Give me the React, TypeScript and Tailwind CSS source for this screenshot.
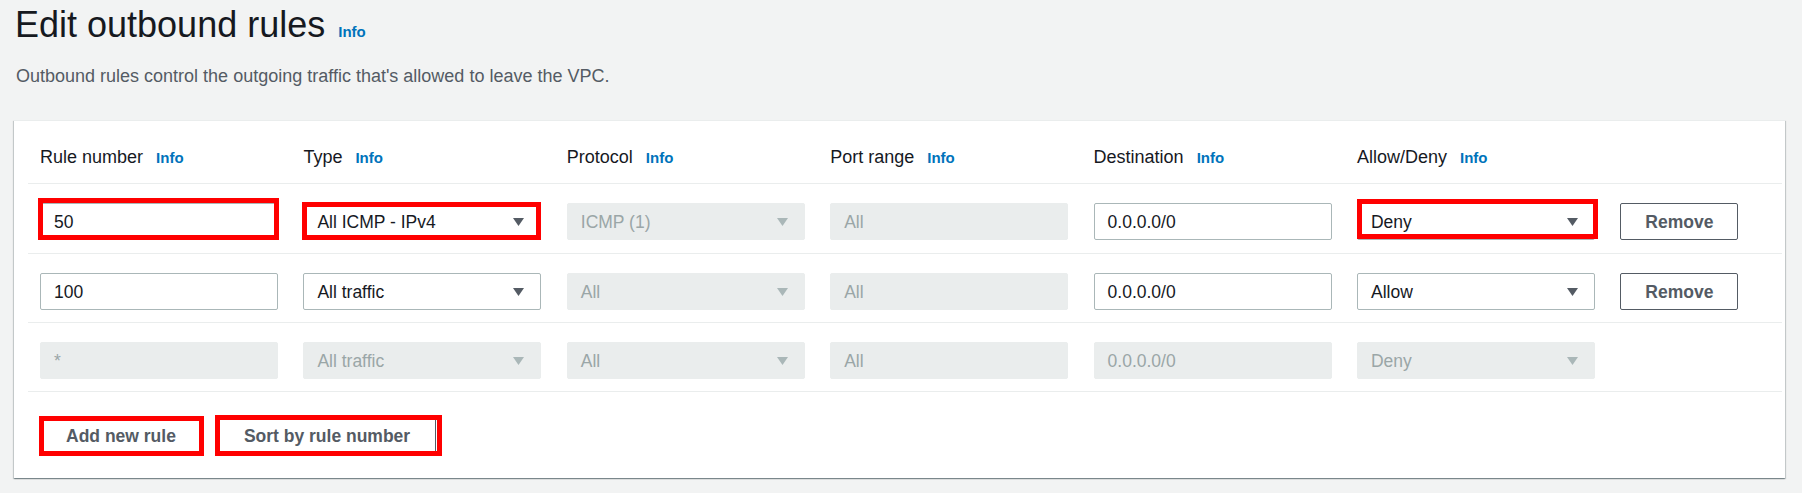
import React from 'react';

type Cell = {
  kind: 'input' | 'select';
  value: string;
  disabled?: boolean;
};

type Rule = {
  cells: Cell[];
  removable: boolean;
  padBottom: string;
};

const headers = ['Rule number', 'Type', 'Protocol', 'Port range', 'Destination', 'Allow/Deny'];

const rules: Rule[] = [
  {
    removable: true,
    padBottom: 'pb-[13px]',
    cells: [
      { kind: 'input', value: '50' },
      { kind: 'select', value: 'All ICMP - IPv4' },
      { kind: 'select', value: 'ICMP (1)', disabled: true },
      { kind: 'input', value: 'All', disabled: true },
      { kind: 'input', value: '0.0.0.0/0' },
      { kind: 'select', value: 'Deny' },
    ],
  },
  {
    removable: true,
    padBottom: 'pb-[12px]',
    cells: [
      { kind: 'input', value: '100' },
      { kind: 'select', value: 'All traffic' },
      { kind: 'select', value: 'All', disabled: true },
      { kind: 'input', value: 'All', disabled: true },
      { kind: 'input', value: '0.0.0.0/0' },
      { kind: 'select', value: 'Allow' },
    ],
  },
  {
    removable: false,
    padBottom: 'pb-[12px]',
    cells: [
      { kind: 'input', value: '*', disabled: true },
      { kind: 'select', value: 'All traffic', disabled: true },
      { kind: 'select', value: 'All', disabled: true },
      { kind: 'input', value: 'All', disabled: true },
      { kind: 'input', value: '0.0.0.0/0', disabled: true },
      { kind: 'select', value: 'Deny', disabled: true },
    ],
  },
];

const Caret = ({ disabled }: { disabled?: boolean }) => (
  <svg width="11" height="8" viewBox="0 0 11 8" className="shrink-0">
    <polygon points="0,0 11,0 5.5,8" fill={disabled ? '#aab7b8' : '#545b64'} />
  </svg>
);

const Field = ({ cell }: { cell: Cell }) => {
  const base = cell.disabled
    ? 'bg-[#eaeded] border-[#eaeded] text-[#9aa6a7]'
    : 'bg-white border-[#aab7b8] text-[#16191f]';
  return (
    <div
      className={`flex h-[37px] w-[238px] shrink-0 items-center justify-between rounded-[2px] border pl-[13px] pr-[16px] ${base}`}
    >
      <span>{cell.value}</span>
      {cell.kind === 'select' && <Caret disabled={cell.disabled} />}
    </div>
  );
};

const Info = ({ className = '' }: { className?: string }) => (
  <a className={`cursor-pointer text-[15px] font-bold text-[#0073bb] ${className}`}>Info</a>
);

const NormalButton = ({ label, className = '' }: { label: string; className?: string }) => (
  <button
    className={`flex h-[37px] items-center justify-center rounded-[2px] border border-[#545b64] bg-white px-[25px] font-bold text-[#545b64] ${className}`}
  >
    {label}
  </button>
);

// hand drawn red highlight boxes from the screenshot
const highlights = [
  'left-[38px] top-[198px] w-[241px] h-[42px]',
  'left-[302px] top-[202px] w-[239px] h-[38px]',
  'left-[1357px] top-[199px] w-[241px] h-[40px]',
  'left-[39px] top-[416px] w-[165px] h-[40px]',
  'left-[215px] top-[415px] w-[227px] h-[41px]',
];

export default function App() {
  return (
    <div className="relative min-h-[493px] w-full bg-[#f2f3f3] pl-[14px] pr-[17px] pt-[3px] font-['Liberation_Sans',Arial,sans-serif] text-[17.5px] leading-[22px] text-[#16191f]">
      <div className="flex items-baseline pl-[1px]">
        <h1 className="text-[36px] font-normal leading-[44px]">Edit outbound rules</h1>
        <Info className="ml-[13px]" />
      </div>
      <p className="mt-[18px] pl-[2px] text-[18px] text-[#545b64]">
        Outbound rules control the outgoing traffic that's allowed to leave the VPC.
      </p>

      <div className="mt-[33px] border-t border-[#eaeded] bg-white shadow-[0_1px_1px_0_rgba(0,28,36,0.3),1px_1px_1px_0_rgba(0,28,36,0.15),-1px_1px_1px_0_rgba(0,28,36,0.15)]">
        <div className="ml-[14px] mr-[3px]">
          <div className="flex gap-[25.4px] border-b border-[#eaeded] pb-[14px] pl-[12px] pt-[25px]">
            {headers.map((h) => (
              <div key={h} className="flex w-[238px] shrink-0 items-baseline">
                <span className="text-[18px]">{h}</span>
                <Info className="ml-[13px]" />
              </div>
            ))}
          </div>

          {rules.map((rule, i) => (
            <div key={i} className={`flex gap-[25.4px] border-b border-[#eaeded] pl-[12px] pt-[19px] ${rule.padBottom}`}>
              {rule.cells.map((cell, j) => (
                <Field key={j} cell={cell} />
              ))}
              {rule.removable && <NormalButton label="Remove" className="w-[118px] px-0" />}
            </div>
          ))}

          <div className="flex pb-[24px] pl-[12px] pt-[25px]">
            <NormalButton label="Add new rule" />
            <NormalButton label="Sort by rule number" className="ml-[16px]" />
          </div>
        </div>
      </div>

      {highlights.map((pos) => (
        <div key={pos} className={`pointer-events-none absolute border-[5px] border-[#ff0000] ${pos}`} />
      ))}
    </div>
  );
}
